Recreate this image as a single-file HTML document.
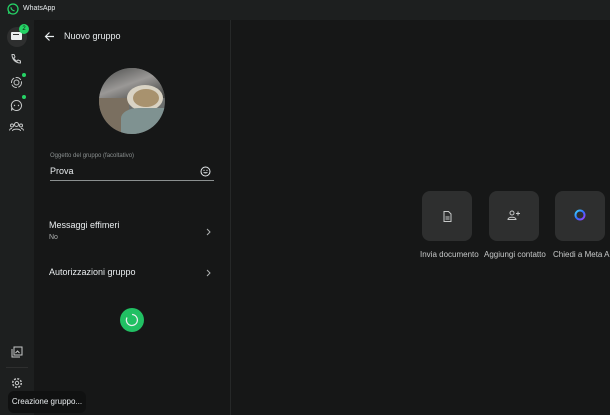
<!DOCTYPE html><html><head><style>
body{margin:0;width:610px;height:415px;background:#161717;font-family:"Liberation Sans",sans-serif;color:#e9edef;position:relative;overflow:hidden}
.a{position:absolute}
.card{position:absolute;top:191px;width:50px;height:50px;border-radius:8px;background:#2e2f2f}
.lbl{position:absolute;top:250px;font-size:8px;color:#c7c9c9;white-space:nowrap}
</style></head><body>
<div class="a" style="left:0;top:0;width:610px;height:20px;background:#1d1f1f"></div>
<div class="a" style="left:0;top:20px;width:34px;height:395px;background:#1d1f1f"></div>
<div class="a" style="left:34px;top:20px;width:196px;height:395px;background:#161717;border-top-left-radius:6px"></div>
<div class="a" style="left:230px;top:20px;width:1px;height:395px;background:#262828"></div>
<svg class="a" style="left:7px;top:3px" width="12" height="12" viewBox="0 0 12 12"><circle cx="6" cy="6" r="5" fill="none" stroke="#25d366" stroke-width="1.3"/><path d="M1.5 10.8l.6-2.2" stroke="#25d366" stroke-width="1.3"/><path d="M4 4.2c0 2 1.6 3.6 3.6 3.6" stroke="#25d366" stroke-width="1.2" fill="none"/></svg>
<div class="a" style="left:23px;top:5px;font-size:7px;color:#e9edef">WhatsApp</div>
<div class="a" style="left:7px;top:27px;width:20px;height:20px;border-radius:50%;background:#2e2f2f"></div>
<div class="a" style="left:11px;top:32px;width:11px;height:8px;background:#e9edef;border-radius:1px"></div>
<div class="a" style="left:13px;top:34px;width:6px;height:1px;background:#2e2f2f"></div>
<div class="a" style="left:19px;top:24px;width:10px;height:10px;border-radius:50%;background:#25d366;font-size:6px;color:#111;text-align:center;line-height:10px">2</div>
<svg class="a" style="left:10px;top:53px" width="12" height="12" viewBox="0 0 12 12"><path d="M2 1.5l2 0 1 2.5-1.3 1c.7 1.5 1.8 2.6 3.3 3.3l1-1.3 2.5 1v2c-5 0-8.5-3.5-8.5-8.5z" fill="none" stroke="#c7c9c9"/></svg>
<svg class="a" style="left:10px;top:76px" width="13" height="13"><circle cx="6.5" cy="6.5" r="5" fill="none" stroke="#c7c9c9" stroke-dasharray="6 1.5"/><circle cx="6.5" cy="6.5" r="2.5" fill="none" stroke="#c7c9c9"/></svg>
<div class="a" style="left:22px;top:73px;width:4px;height:4px;border-radius:50%;background:#25d366"></div>
<svg class="a" style="left:10px;top:99px" width="13" height="13"><path d="M6.5 1.5a5 5 0 1 1-4 8l-1 2 .3-3a5 5 0 0 1 4.7-7z" fill="none" stroke="#c7c9c9"/><circle cx="4.5" cy="6.5" r=".7" fill="#c7c9c9"/><circle cx="8.5" cy="6.5" r=".7" fill="#c7c9c9"/></svg>
<div class="a" style="left:22px;top:95px;width:4px;height:4px;border-radius:50%;background:#25d366"></div>
<svg class="a" style="left:9px;top:121px" width="15" height="12"><circle cx="7.5" cy="3.5" r="2" fill="none" stroke="#c7c9c9"/><path d="M3.5 10c0-2.5 8-2.5 8 0" fill="none" stroke="#c7c9c9"/><circle cx="3" cy="4.5" r="1.5" fill="none" stroke="#c7c9c9"/><circle cx="12" cy="4.5" r="1.5" fill="none" stroke="#c7c9c9"/><path d="M.5 9.5c0-1.5 1.5-2 2.5-2M14.5 9.5c0-1.5-1.5-2-2.5-2" fill="none" stroke="#c7c9c9"/></svg>
<svg class="a" style="left:11px;top:346px" width="12" height="12"><rect x="3" y="1" width="8" height="8" fill="none" stroke="#c7c9c9"/><path d="M1 3v8h8" fill="none" stroke="#c7c9c9"/><path d="M4.5 7l2-2 2 2" fill="none" stroke="#c7c9c9"/></svg>
<div class="a" style="left:6px;top:367px;width:22px;height:1px;background:#2e2f2f"></div>
<svg class="a" style="left:11px;top:377px" width="12" height="12"><circle cx="6" cy="6" r="4.3" fill="none" stroke="#c7c9c9" stroke-width="1.5" stroke-dasharray="2 1.4"/><circle cx="6" cy="6" r="1.7" fill="none" stroke="#c7c9c9"/></svg>
<div class="a" style="left:8px;top:391px;width:78px;height:22px;border-radius:6px;background:#101111;font-size:8px;line-height:22px;text-align:center;color:#e9edef">Creazione gruppo...</div>
<svg class="a" style="left:44px;top:31px" width="11" height="11"><path d="M10 5.5H1.5M5.5 1.5l-4 4 4 4" fill="none" stroke="#e9edef" stroke-width="1.2"/></svg>
<div class="a" style="left:64px;top:31px;font-size:9px">Nuovo gruppo</div>
<div class="a" style="left:99px;top:68px;width:66px;height:66px;border-radius:50%;overflow:hidden;background:#6b6e6d">
<div class="a" style="left:0;top:0;width:66px;height:30px;background:linear-gradient(160deg,#4a4b4a,#9a9896 50%,#3d3e3c)"></div>
<div class="a" style="left:0;top:30px;width:30px;height:36px;background:#7a6f60"></div>
<div class="a" style="left:28px;top:17px;width:36px;height:26px;border-radius:50%;background:#d9d3c4"></div>
<div class="a" style="left:34px;top:21px;width:26px;height:18px;border-radius:50%;background:#a8926e"></div>
<div class="a" style="left:22px;top:40px;width:44px;height:26px;border-radius:40% 0 0 0;background:#7f9291"></div></div>
<div class="a" style="left:50px;top:153px;font-size:6px;color:#8b9090">Oggetto del gruppo (facoltativo)</div>
<div class="a" style="left:50px;top:166px;font-size:9px">Prova</div>
<svg class="a" style="left:200px;top:166px" width="11" height="11"><circle cx="5.5" cy="5.5" r="4.5" fill="none" stroke="#e9edef"/><path d="M3.3 6.3h4.4c0 1.5-4.4 1.5-4.4 0z" fill="#e9edef"/><circle cx="4" cy="4.3" r=".6" fill="#e9edef"/><circle cx="7" cy="4.3" r=".6" fill="#e9edef"/></svg>
<div class="a" style="left:50px;top:180px;width:164px;height:1px;background:#8b9090"></div>
<div class="a" style="left:49px;top:220px;font-size:9px">Messaggi effimeri</div>
<div class="a" style="left:49px;top:234px;font-size:7px;color:#aeb1b1">No</div>
<svg class="a" style="left:206px;top:228px" width="5" height="8"><path d="M1 1l3 3-3 3" fill="none" stroke="#aeb1b1"/></svg>
<div class="a" style="left:49px;top:267px;font-size:9px">Autorizzazioni gruppo</div>
<svg class="a" style="left:206px;top:269px" width="5" height="8"><path d="M1 1l3 3-3 3" fill="none" stroke="#aeb1b1"/></svg>
<div class="a" style="left:120px;top:308px;width:24px;height:24px;border-radius:50%;background:#21c063"></div>
<svg class="a" style="left:124px;top:312px" width="16" height="16"><path d="M8 2.5a5.5 5.5 0 1 1-5 3" fill="none" stroke="#e9edef" stroke-width="1.3"/></svg>
<div class="card" style="left:422px"></div><div class="card" style="left:489px"></div><div class="card" style="left:555px"></div>
<svg class="a" style="left:443px;top:211px" width="9" height="11"><path d="M1 .5h4.5l2.5 2.5v7.5H1z" fill="none" stroke="#c7c9c9"/><path d="M2.5 6h4M2.5 8h4" stroke="#c7c9c9"/></svg>
<svg class="a" style="left:507px;top:210px" width="13" height="10"><circle cx="5" cy="3" r="2" fill="none" stroke="#c7c9c9"/><path d="M1 9.5c0-3 8-3 8 0z" fill="none" stroke="#c7c9c9"/><path d="M11 1.5v4M9 3.5h4" stroke="#c7c9c9"/></svg>
<svg class="a" style="left:573px;top:208px" width="14" height="14"><defs><linearGradient id="g" x1="0" y1="0" x2="1" y2="1"><stop offset="0" stop-color="#3ed6ff"/><stop offset=".5" stop-color="#2f6cff"/><stop offset="1" stop-color="#a23bff"/></linearGradient></defs><circle cx="7" cy="7" r="4.5" fill="none" stroke="url(#g)" stroke-width="2"/></svg>
<div class="lbl" style="left:420px">Invia documento</div>
<div class="lbl" style="left:484px">Aggiungi contatto</div>
<div class="lbl" style="left:553px">Chiedi a Meta AI</div>
</body></html>
